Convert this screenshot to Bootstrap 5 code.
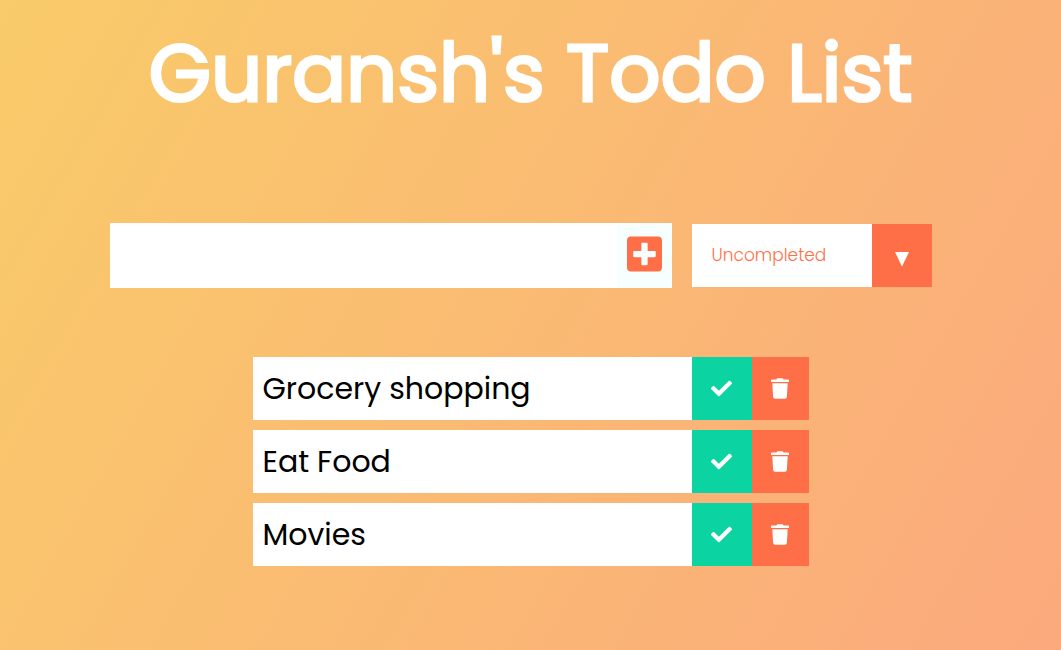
<!DOCTYPE html>
<html lang="en">
<head>
<meta charset="utf-8">
<meta name="viewport" content="width=device-width, initial-scale=1">
<title>Guransh's Todo List</title>
<link rel="stylesheet" href="https://cdn.jsdelivr.net/npm/bootstrap@5.3.0/dist/css/bootstrap.min.css">
<style>
  :root { --coral: #ff6f47; --mint: #0bd4a2; }
  body {
    font-family: Poppins, Inter, sans-serif;
    color: #fff;
    background: linear-gradient(120deg, #f9cb69, #fba97d);
  }
  .page-title { font-size: 80px; line-height: 122px; font-weight: 400; -webkit-text-stroke: 3px #fff; padding-top: 12px; }
  .todo-form { padding-top: 89px; gap: 20px; margin-right: 20px; }
  .entry { width: 562px; height: 65px; }
  .entry input { font-size: 32px; color: #000; box-shadow: none !important; }
  .add-btn { width: 55px; background: #f7fffe; color: var(--coral); }
  .filter { width: 240px; height: 63px; }
  .filter select { appearance: none; font-size: 17px; font-weight: 300; padding: 0 20px; color: var(--coral); background: #fff; outline: none; }
  .filter-arrow { width: 60px; background: var(--coral); pointer-events: none; }
  .todo-list { width: 556px; gap: 10px; margin-top: 69px; }
  .todo { height: 63px; background: #fff; color: #000; font-size: 30px; }
  .todo-text { padding-left: 10px; }
  .done-btn { width: 60px; background: var(--mint); }
  .trash-btn { width: 57px; background: var(--coral); }
</style>
</head>
<body class="min-vh-100">
<header class="text-center">
  <h1 class="page-title mb-0">Guransh's Todo List</h1>
</header>
<main class="d-flex flex-column align-items-center">
  <form class="todo-form d-flex flex-wrap justify-content-center align-items-center">
    <div class="entry d-flex mw-100">
      <input type="text" class="form-control border-0 rounded-0" aria-label="New todo">
      <button type="submit" class="add-btn btn border-0 rounded-0 p-0 pb-1 flex-shrink-0" aria-label="Add todo">
        <svg width="35" height="40" viewBox="0 0 448 512" fill="currentColor" class="d-block mx-auto"><path d="M400 32H48C21.500 32 0 53.500 0 80v352c0 26.500 21.500 48 48 48h352c26.500 0 48-21.500 48-48V80c0-26.500-21.500-48-48-48zm-32 252c0 6.600-5.400 12-12 12h-92v92c0 6.600-5.400 12-12 12h-56c-6.600 0-12-5.400-12-12v-92H92c-6.600 0-12-5.400-12-12v-56c0-6.600 5.400-12 12-12h92v-92c0-6.600 5.400-12 12-12h56c6.600 0 12 5.400 12 12v92h92c6.600 0 12 5.400 12 12v56z"/></svg>
      </button>
    </div>
    <div class="filter position-relative mw-100">
      <select class="w-100 h-100 border-0 rounded-0" aria-label="Filter todos">
        <option>All</option>
        <option>Completed</option>
        <option selected>Uncompleted</option>
      </select>
      <span class="filter-arrow position-absolute top-0 end-0 h-100 d-flex align-items-center justify-content-center">
        <svg width="14" height="15" viewBox="0 0 14 15" fill="#fff" class="mt-2"><path d="M0 0h14L7 14.500z"/></svg>
      </span>
    </div>
  </form>
  <ul class="todo-list list-unstyled d-flex flex-column mw-100">
    <li class="todo d-flex">
      <span class="todo-text flex-grow-1 align-self-center">Grocery shopping</span>
      <button type="button" class="done-btn btn border-0 rounded-0 p-0" aria-label="Complete"><svg width="21" height="21" viewBox="0 0 512 512" fill="#fff" class="d-block mx-auto"><use href="#check"/></svg></button>
      <button type="button" class="trash-btn btn border-0 rounded-0 p-0" aria-label="Delete"><svg width="18" height="21" viewBox="0 0 448 512" fill="#fff" class="d-block mx-auto"><use href="#trash"/></svg></button>
    </li>
    <li class="todo d-flex">
      <span class="todo-text flex-grow-1 align-self-center">Eat Food</span>
      <button type="button" class="done-btn btn border-0 rounded-0 p-0" aria-label="Complete"><svg width="21" height="21" viewBox="0 0 512 512" fill="#fff" class="d-block mx-auto"><use href="#check"/></svg></button>
      <button type="button" class="trash-btn btn border-0 rounded-0 p-0" aria-label="Delete"><svg width="18" height="21" viewBox="0 0 448 512" fill="#fff" class="d-block mx-auto"><use href="#trash"/></svg></button>
    </li>
    <li class="todo d-flex">
      <span class="todo-text flex-grow-1 align-self-center">Movies</span>
      <button type="button" class="done-btn btn border-0 rounded-0 p-0" aria-label="Complete"><svg width="21" height="21" viewBox="0 0 512 512" fill="#fff" class="d-block mx-auto"><use href="#check"/></svg></button>
      <button type="button" class="trash-btn btn border-0 rounded-0 p-0" aria-label="Delete"><svg width="18" height="21" viewBox="0 0 448 512" fill="#fff" class="d-block mx-auto"><use href="#trash"/></svg></button>
    </li>
  </ul>
</main>
<svg width="0" height="0" class="position-absolute" aria-hidden="true">
  <defs>
    <path id="check" d="M173.898 439.404l-166.400-166.400c-9.997-9.997-9.997-26.206 0-36.204l36.203-36.204c9.997-9.998 26.207-9.998 36.204 0L192 312.690 432.095 72.596c9.997-9.997 26.207-9.997 36.204 0l36.203 36.204c9.997 9.997 9.997 26.206 0 36.204l-294.400 294.401c-9.998 9.997-26.207 9.997-36.204-.001z"/>
    <path id="trash" d="M432 32H312l-9.400-18.700A24 24 0 0 0 281.100 0H166.800a23.720 23.720 0 0 0-21.400 13.300L136 32H16A16 16 0 0 0 0 48v32a16 16 0 0 0 16 16h416a16 16 0 0 0 16-16V48a16 16 0 0 0-16-16zM53.200 467a48 48 0 0 0 47.900 45h245.800a48 48 0 0 0 47.900-45L416 128H32z"/>
  </defs>
</svg>
<script src="https://cdn.jsdelivr.net/npm/bootstrap@5.3.0/dist/js/bootstrap.bundle.min.js"></script>
</body>
</html>
